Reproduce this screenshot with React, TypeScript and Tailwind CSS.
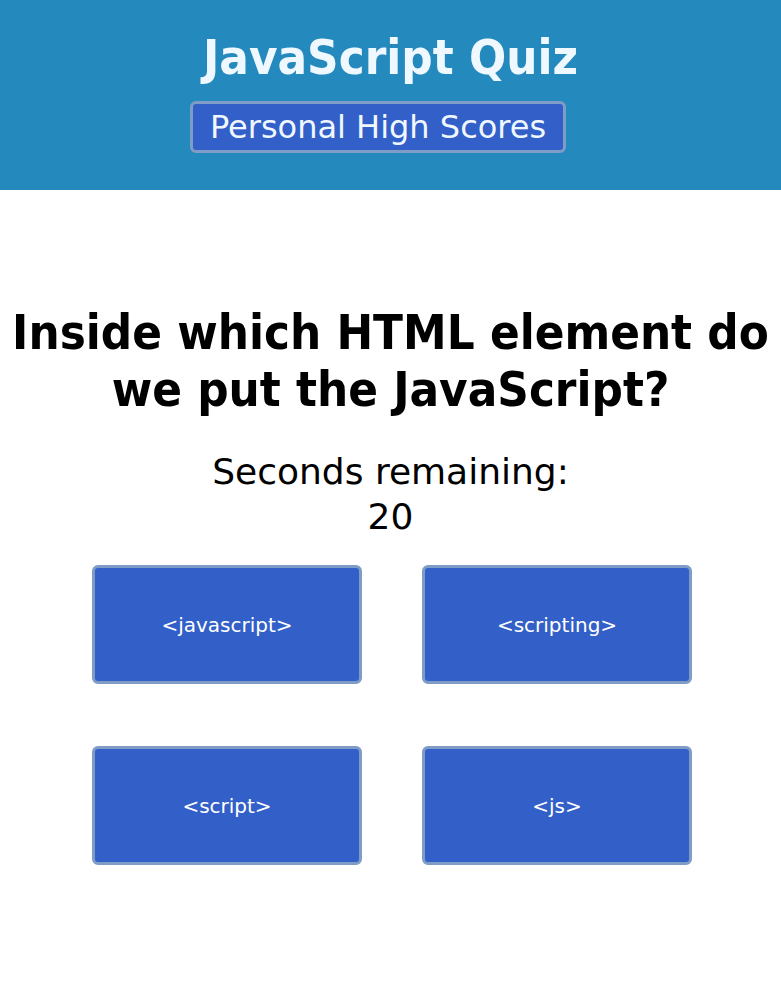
const answers = ['<javascript>', '<scripting>', '<script>', '<js>']

export default function App() {
  return (
    <div className="min-h-[1008px] bg-white font-['DejaVu_Sans',sans-serif] text-black">
      <header className="bg-[#2489bd] h-[190px] flex flex-col items-center pt-[25px]">
        <h1 className="font-['DejaVu_Sans_Condensed','DejaVu_Sans',sans-serif] text-[48.75px] leading-[64px] font-bold text-[#f0f8ff]">
          JavaScript Quiz
        </h1>
        <button className="mt-[12px] mr-[25px] h-[52px] px-[17px] bg-[#335fc8] border-[3px] border-[#7f9cc6] rounded-[6px] text-[32px] leading-none text-[#f0f8ff]">
          Personal High Scores
        </button>
      </header>

      <main className="flex flex-col items-center pt-[114px]">
        <h2 className="font-['DejaVu_Sans_Condensed','DejaVu_Sans',sans-serif] text-[48.75px] leading-[57px] font-bold text-center">
          Inside which HTML element do
          <br />
          we put the JavaScript?
        </h2>
        <p className="mt-[31px] text-[36px] leading-[45px] text-center">
          Seconds remaining:
          <br />
          20
        </p>
        <div className="mt-[26px] grid grid-cols-2 gap-x-[60px] gap-y-[62px] pl-[3px]">
          {answers.map((a) => (
            <button
              key={a}
              className="w-[270px] h-[119px] bg-[#3360c8] border-[3px] border-[#7f9cc6] rounded-[6px] text-white text-[20px]"
            >
              {a}
            </button>
          ))}
        </div>
      </main>
    </div>
  )
}
